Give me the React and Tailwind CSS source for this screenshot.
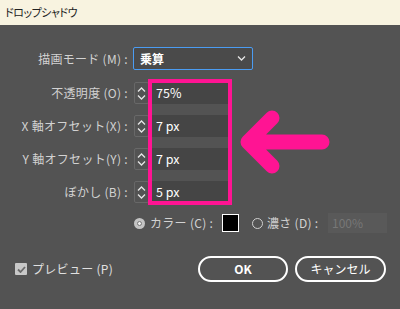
import React from "react";

const font = "font-['Noto_Sans_CJK_JP','Noto_Sans',sans-serif]";

const Spinner = () => (
  <div className="flex h-[22px] w-[15px] flex-col items-center justify-center gap-[3px] rounded-[2px] border border-[#686868]">
    <svg width="9" height="5" viewBox="0 0 9 5">
      <path d="M1 4.5 L4.5 1 L8 4.5" fill="none" stroke="#e6e6e6" strokeWidth="1.3" />
    </svg>
    <svg width="9" height="5" viewBox="0 0 9 5">
      <path d="M1 0.5 L4.5 4 L8 0.5" fill="none" stroke="#e6e6e6" strokeWidth="1.3" />
    </svg>
  </div>
);

const NumRow = ({ label, value, first }) => (
  <div className={`flex h-[22px] items-center ${first ? "mt-[12px]" : "mt-[11px]"}`}>
    <div className="w-[134px] whitespace-nowrap pr-[6px] text-right text-[12px] tracking-[0.3px] text-[#d2d2d2]">
      {label}
    </div>
    <Spinner />
    <div className="ml-[3px] flex h-[22px] w-[76px] items-center bg-[#454545] pl-[4px] text-[12.5px] text-white">
      {value}
    </div>
  </div>
);

const App = () => {
  return (
    <div className={`relative h-[309px] w-[400px] overflow-hidden bg-[#535353] ${font}`}>
      <div className="flex h-[25px] items-center bg-[#f8f3e0] pl-[5px] text-[11px] tracking-[-0.5px] text-[#222] [font-feature-settings:'palt']">
        ドロップシャドウ
      </div>

      <div className="pt-[22px]">
        <div className="flex h-[23px] items-center">
          <div className="w-[133px] whitespace-nowrap pr-[5px] text-right text-[12px] tracking-[0.3px] text-[#d2d2d2]">
            描画モード (M) :
          </div>
          <div className="flex h-[23px] w-[120px] items-center justify-between rounded-[2px] border border-[#4b9cf2] bg-[#4a4a4a] pl-[6px] pr-[6px]">
            <span className="text-[12px] font-bold text-white">乗算</span>
            <svg width="9" height="5" viewBox="0 0 9 5">
              <path d="M1 0.5 L4.5 4 L8 0.5" fill="none" stroke="#e6e6e6" strokeWidth="1.3" />
            </svg>
          </div>
        </div>

        <NumRow label="不透明度 (O) :" value="75%" first />
        <NumRow label="X 軸オフセット(X) :" value="7 px" />
        <NumRow label="Y 軸オフセット(Y) :" value="7 px" />
        <NumRow label="ぼかし (B) :" value="5 px" />

        <div className="mt-[10px] flex h-[20px] items-center pl-[134px] text-[12px] text-[#d2d2d2]">
          <div className="flex h-[11px] w-[11px] items-center justify-center rounded-full bg-[#c4c4c4]">
            <div className="h-[5px] w-[5px] rounded-full border border-[#777] bg-[#eee]" />
          </div>
          <span className="ml-[5px] w-[72px] whitespace-nowrap tracking-[0.3px]">カラー (C) :</span>
          <div className="h-[18px] w-[17px] border border-white bg-black" />
          <div className="ml-[13px] h-[11px] w-[11px] rounded-full border border-[#d0d0d0]" />
          <span className="ml-[4px] w-[61px] whitespace-nowrap tracking-[0.3px]">濃さ (D) :</span>
          <div className="flex h-[20px] w-[59px] items-center bg-[#595959] pl-[4px] text-[#777]">100%</div>
        </div>

        <div className="mt-[23px] flex h-[26px] items-center pl-[15px] pr-[14px]">
          <div className="flex h-[12px] w-[12px] items-center justify-center rounded-[1px] bg-[#c8c8c8]">
            <svg width="9" height="7" viewBox="0 0 9 7">
              <path d="M1 3.5 L3.5 6 L8 1" fill="none" stroke="#6a6a6a" strokeWidth="1.8" />
            </svg>
          </div>
          <span className="ml-[5px] text-[12px] tracking-[0.3px] text-[#e0e0e0]">プレビュー (P)</span>
          <div className="ml-auto flex gap-[7px]">
            <button className="h-[26px] w-[90px] rounded-full border-2 border-white text-[12px] font-bold text-white">
              OK
            </button>
            <button className="h-[26px] w-[91px] rounded-full border-2 border-white text-[12px] text-white">
              キャンセル
            </button>
          </div>
        </div>
      </div>

      <div className="absolute left-[148px] top-[79px] h-[126px] w-[84px] border-4 border-[#ff1493]" />
      <svg className="absolute left-0 top-0" width="400" height="309">
        <path
          d="M322 142 L248 142 M272 118 L248 142 L272 166"
          fill="none"
          stroke="#ff1493"
          strokeWidth="15"
          strokeLinecap="round"
          strokeLinejoin="round"
        />
      </svg>
    </div>
  );
};

export default App;
